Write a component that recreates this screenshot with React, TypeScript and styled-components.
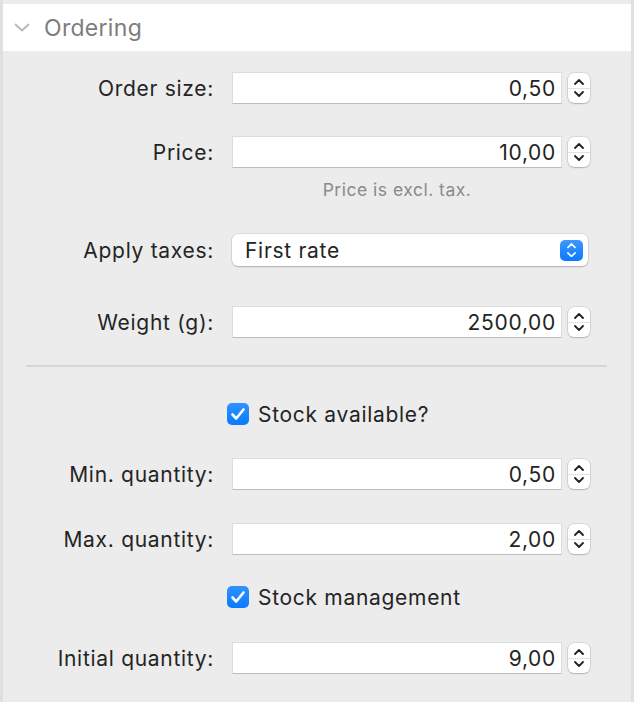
import * as React from "react";
import styled, { createGlobalStyle } from "styled-components";

const colors = {
  bg: "#ececec",
  edge: "#e0e0e0",
  white: "#ffffff",
  text: "#242424",
  muted: "#8a8a8a",
  header: "#7d7d7d",
  chevron: "#b8b8b8",
  blue: "#0a7aff",
  line: "#d6d6d6",
};

const font = `Inter, "Noto Sans", "Liberation Sans", sans-serif`;

const GlobalStyle = createGlobalStyle`
  html, body {
    margin: 0;
    padding: 0;
    background: ${colors.bg};
  }
  body {
    font-family: ${font};
    color: ${colors.text};
  }
`;

const Panel = styled.div`
  width: 634px;
  height: 702px;
  box-sizing: border-box;
  border-left: 3px solid ${colors.edge};
  border-right: 3px solid ${colors.edge};
  padding-top: 4px;
  overflow: hidden;
`;

const Header = styled.div`
  height: 47px;
  background: ${colors.white};
  display: flex;
  align-items: center;
  padding-left: 11px;
  gap: 14px;
  font-size: 23px;
  letter-spacing: 0.3px;
  color: ${colors.header};
`;

const Form = styled.div`
  display: flex;
  flex-direction: column;
`;

const Row = styled.div<{ $mt: number }>`
  display: flex;
  align-items: center;
  height: 32px;
  margin-top: ${(p) => p.$mt}px;
`;

const Label = styled.div`
  width: 211px;
  text-align: right;
  font-size: 21px;
  letter-spacing: 0.7px;
  white-space: nowrap;
  color: ${colors.text};
`;

const Field = styled.div`
  margin-left: 18px;
  width: 330px;
  height: 32px;
  box-sizing: border-box;
  background: ${colors.white};
  border: 1px solid #dddddd;
  border-bottom-color: #bdbdbd;
  display: flex;
  align-items: center;
  justify-content: flex-end;
  padding-right: 5px;
  font-size: 21px;
  letter-spacing: 0.7px;
`;

const Stepper = styled.div`
  margin-left: 6px;
  width: 22px;
  height: 30px;
  border-radius: 6px;
  background: ${colors.white};
  box-shadow: 0 0 0 0.5px rgba(0, 0, 0, 0.16), 0 1px 1.5px rgba(0, 0, 0, 0.18);
  display: flex;
  flex-direction: column;
  align-items: center;
  justify-content: space-evenly;
  position: relative;
`;

const StepLine = styled.div`
  position: absolute;
  left: 0;
  right: 0;
  top: 50%;
  height: 1px;
  background: #e2e2e2;
`;

const Popup = styled.div`
  margin-left: 18px;
  width: 356px;
  height: 32px;
  box-sizing: border-box;
  border-radius: 6px;
  background: ${colors.white};
  box-shadow: 0 0 0 0.5px rgba(0, 0, 0, 0.14), 0 1px 1.5px rgba(0, 0, 0, 0.2);
  display: flex;
  align-items: center;
  justify-content: space-between;
  padding: 0 5px 0 13px;
  font-size: 21px;
  letter-spacing: 0.7px;
`;

const PopupKnob = styled.div`
  width: 23px;
  height: 21px;
  border-radius: 5px;
  background: linear-gradient(#3d98ff, ${colors.blue});
  display: flex;
  flex-direction: column;
  align-items: center;
  justify-content: center;
  gap: 3px;
`;

const Helper = styled.div`
  margin-left: 229px;
  width: 330px;
  margin-top: 11px;
  height: 20px;
  text-align: center;
  font-size: 17.5px;
  letter-spacing: 0.5px;
  color: ${colors.muted};
`;

const Divider = styled.div`
  margin: 27px 24px 0 23px;
  height: 2px;
  background: ${colors.line};
`;

const CheckRow = styled.label<{ $mt: number }>`
  display: flex;
  align-items: center;
  height: 32px;
  margin-top: ${(p) => p.$mt}px;
  padding-left: 224px;
  gap: 9px;
  font-size: 21px;
  letter-spacing: 0.7px;
`;

const CheckBox = styled.span`
  width: 22px;
  height: 22px;
  border-radius: 5px;
  background: linear-gradient(#2f93ff, ${colors.blue});
  display: flex;
  align-items: center;
  justify-content: center;
`;

const Chevron = ({ up, color, w = 10 }: { up?: boolean; color: string; w?: number }) => (
  <svg width={w} height={w * 0.6} viewBox="0 0 10 6">
    <path
      d={up ? "M1 5 L5 1 L9 5" : "M1 1 L5 5 L9 1"}
      fill="none"
      stroke={color}
      strokeWidth={1.8}
      strokeLinecap="round"
      strokeLinejoin="round"
    />
  </svg>
);

const NumberRow = ({ label, value, mt }: { label: string; value: string; mt: number }) => (
  <Row $mt={mt}>
    <Label>{label}</Label>
    <Field>{value}</Field>
    <Stepper>
      <StepLine />
      <Chevron up color="#222" w={10} />
      <Chevron color="#222" w={10} />
    </Stepper>
  </Row>
);

const Check = ({ label, mt }: { label: string; mt: number }) => (
  <CheckRow $mt={mt}>
    <CheckBox>
      <svg width="16" height="14" viewBox="0 0 16 14">
        <path
          d="M2.5 7.5 L6.2 11.5 L13.5 2.5"
          fill="none"
          stroke="#fff"
          strokeWidth={2.6}
          strokeLinecap="round"
          strokeLinejoin="round"
        />
      </svg>
    </CheckBox>
    {label}
  </CheckRow>
);

export default function App() {
  return (
    <>
      <GlobalStyle />
      <Panel>
        <Header>
          <svg width="16" height="9" viewBox="0 0 16 9">
            <path
              d="M1.5 1.5 L8 7.5 L14.5 1.5"
              fill="none"
              stroke={colors.chevron}
              strokeWidth={1.8}
              strokeLinecap="round"
              strokeLinejoin="round"
            />
          </svg>
          Ordering
        </Header>
        <Form>
          <NumberRow label="Order size:" value="0,50" mt={21} />
          <NumberRow label="Price:" value="10,00" mt={32} />
          <Helper>Price is excl. tax.</Helper>
          <Row $mt={35}>
            <Label>Apply taxes:</Label>
            <Popup>
              First rate
              <PopupKnob>
                <Chevron up color="#fff" w={9} />
                <Chevron color="#fff" w={9} />
              </PopupKnob>
            </Popup>
          </Row>
          <NumberRow label="Weight (g):" value="2500,00" mt={40} />
          <Divider />
          <Check label="Stock available?" mt={31} />
          <NumberRow label="Min. quantity:" value="0,50" mt={28} />
          <NumberRow label="Max. quantity:" value="2,00" mt={33} />
          <Check label="Stock management" mt={26} />
          <NumberRow label="Initial quantity:" value="9,00" mt={29} />
        </Form>
      </Panel>
    </>
  );
}
